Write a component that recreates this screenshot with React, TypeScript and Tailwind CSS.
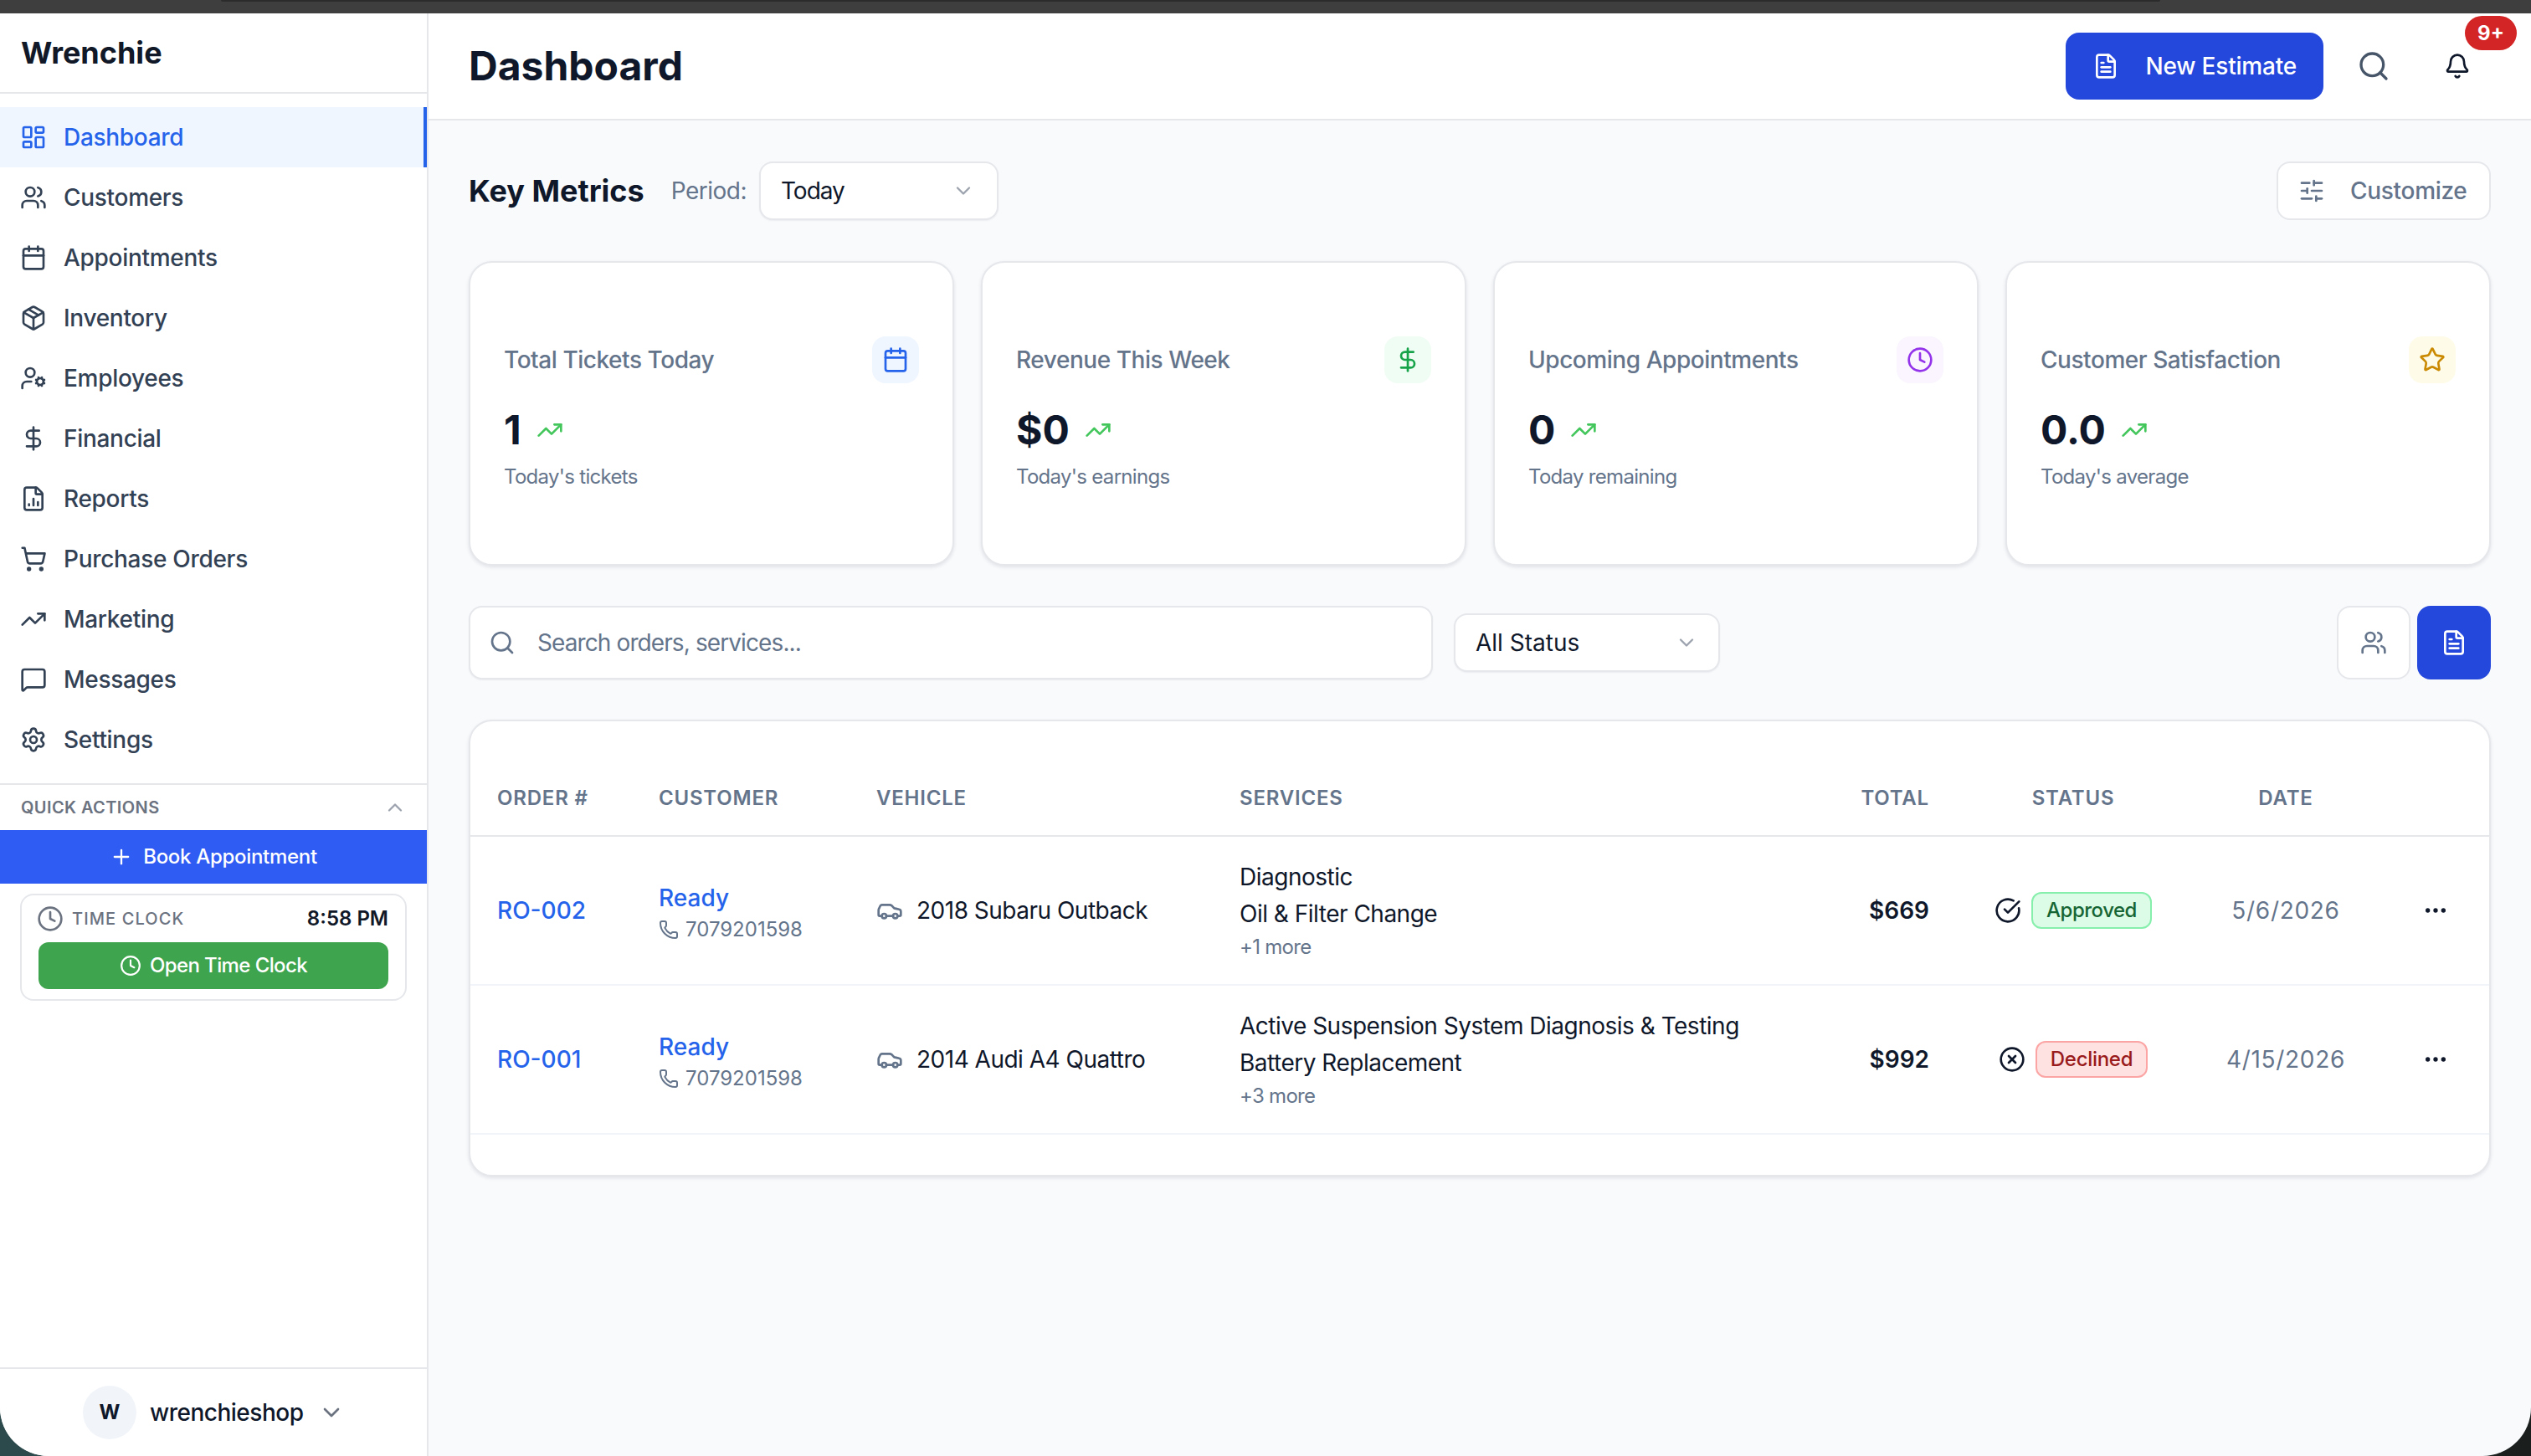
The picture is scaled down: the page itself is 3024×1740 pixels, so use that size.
import {
  Calendar,
  Car,
  ChevronDown,
  ChevronUp,
  CircleCheckBig,
  CircleX,
  Clock,
  DollarSign,
  Ellipsis,
  FileChartColumn,
  FileText,
  LayoutDashboard,
  MessageSquare,
  Package,
  Bell,
  Phone,
  Plus,
  Search,
  Settings,
  ShoppingCart,
  SlidersHorizontal,
  Star,
  TrendingUp,
  UserCog,
  Users,
} from "lucide-react";

const navItems = [
  { label: "Dashboard", icon: LayoutDashboard, active: true },
  { label: "Customers", icon: Users },
  { label: "Appointments", icon: Calendar },
  { label: "Inventory", icon: Package },
  { label: "Employees", icon: UserCog },
  { label: "Financial", icon: DollarSign },
  { label: "Reports", icon: FileChartColumn },
  { label: "Purchase Orders", icon: ShoppingCart },
  { label: "Marketing", icon: TrendingUp },
  { label: "Messages", icon: MessageSquare },
  { label: "Settings", icon: Settings },
];

const metrics = [
  { title: "Total Tickets Today", value: "1", note: "Today's tickets", icon: Calendar, box: "bg-[#eff6ff] text-[#2563eb]" },
  { title: "Revenue This Week", value: "$0", note: "Today's earnings", icon: DollarSign, box: "bg-[#f0fdf4] text-[#16a34a]" },
  { title: "Upcoming Appointments", value: "0", note: "Today remaining", icon: Clock, box: "bg-[#faf5ff] text-[#9333ea]" },
  { title: "Customer Satisfaction", value: "0.0", note: "Today's average", icon: Star, box: "bg-[#fefce8] text-[#ca8a04]" },
];

const orders = [
  {
    id: "RO-002",
    vehicle: "2018 Subaru Outback",
    services: ["Diagnostic", "Oil & Filter Change"],
    more: "+1 more",
    total: "$669",
    status: "Approved",
    date: "5/6/2026",
  },
  {
    id: "RO-001",
    vehicle: "2014 Audi A4 Quattro",
    services: ["Active Suspension System Diagnosis & Testing", "Battery Replacement"],
    more: "+3 more",
    total: "$992",
    status: "Declined",
    date: "4/15/2026",
  },
];

const columns = ["ORDER #", "CUSTOMER", "VEHICLE", "SERVICES"];

function Sidebar() {
  return (
    <aside className="w-[512px] shrink-0 bg-white border-r-2 border-[#e5e7eb] flex flex-col">
      <div className="h-[96px] shrink-0 border-b-2 border-[#e5e7eb] flex items-center pl-[25px]">
        <span className="text-[36px] font-bold text-[#111827]">Wrenchie</span>
      </div>

      <nav className="py-4 border-b-2 border-[#e5e7eb]">
        {navItems.map((item) => (
          <div
            key={item.label}
            className={
              item.active
                ? "h-[72px] flex items-center gap-5 pl-6 bg-[#eff6ff] border-r-4 border-[#2563eb] text-[#2563eb]"
                : "h-[72px] flex items-center gap-5 pl-6 text-[#334155]"
            }
          >
            <item.icon className="w-8 h-8" />
            <span className="text-[28px] font-medium tracking-[-0.3px]">{item.label}</span>
          </div>
        ))}
      </nav>

      <div className="h-[54px] flex items-center justify-between pl-[25px] pr-6">
        <span className="text-[20px] font-semibold tracking-[0.4px] text-[#6b7280]">QUICK ACTIONS</span>
        <ChevronUp className="w-7 h-7 text-[#9ca3af]" />
      </div>
      <button className="h-[64px] flex items-center justify-center gap-3 bg-[#2f5cf3] text-white">
        <Plus className="w-7 h-7" />
        <span className="text-[24px] font-medium tracking-[-0.3px]">Book Appointment</span>
      </button>

      <div className="mt-3 mx-6 border-2 border-[#e5e7eb] rounded-2xl px-5 py-3">
        <div className="h-8 flex items-center justify-between">
          <div className="flex items-center gap-[10px] text-[#6b7280] -ml-0.5">
            <Clock className="w-8 h-8" />
            <span className="text-[20px] font-medium tracking-[1.1px]">TIME CLOCK</span>
          </div>
          <span className="text-[24px] font-semibold text-[#111827]">8:58 PM</span>
        </div>
        <button className="mt-3 w-full h-[56px] rounded-xl bg-[#3fa44e] text-white flex items-center justify-center gap-[10px]">
          <Clock className="w-[26px] h-[26px]" />
          <span className="text-[24px] font-medium tracking-[-0.6px]">Open Time Clock</span>
        </button>
      </div>

      <div className="mt-auto h-[106px] border-t-2 border-[#e5e7eb] flex items-center pl-[99px]">
        <div className="w-16 h-16 rounded-full bg-[#f1f5f9] flex items-center justify-center text-[24px] font-bold text-[#0f172a]">
          W
        </div>
        <span className="ml-4 text-[28px] font-medium tracking-[-0.5px] text-[#0f172a]">wrenchieshop</span>
        <ChevronDown className="ml-[18px] w-8 h-8 text-[#6b7280]" />
      </div>
    </aside>
  );
}

function Header() {
  return (
    <header className="h-[128px] shrink-0 bg-white border-b-2 border-[#e5e7eb] flex items-center justify-between pl-12 pr-[52px]">
      <h1 className="text-[48px] font-bold text-[#0f172a]">Dashboard</h1>
      <div className="flex items-center">
        <button className="h-[80px] px-8 rounded-2xl bg-[#2447dc] text-white flex items-center gap-8">
          <FileText className="w-8 h-8" />
          <span className="text-[28px] font-medium tracking-[-0.2px]">New Estimate</span>
        </button>
        <button className="ml-6 w-[72px] h-[72px] flex items-center justify-center text-[#475569]">
          <Search className="w-10 h-10" />
        </button>
        <button className="relative ml-7 w-[72px] h-[72px] flex items-center justify-center text-[#0f172a]">
          <Bell className="w-8 h-8" />
          <span className="absolute left-[45px] top-[-24px] w-[62px] h-[41px] rounded-full bg-[#d32525] text-white text-[24px] font-bold flex items-center justify-center">
            9+
          </span>
        </button>
      </div>
    </header>
  );
}

function MetricCard({ metric }: { metric: (typeof metrics)[number] }) {
  return (
    <div className="bg-white border-2 border-[#e5e7eb] rounded-[28px] shadow-[0_2px_4px_rgba(15,23,42,0.1)] px-10 flex flex-col justify-center">
      <div className="flex items-center justify-between">
        <span className="text-[28px] font-medium tracking-[-0.45px] text-[#64748b]">{metric.title}</span>
        <div className={`w-14 h-14 rounded-2xl flex items-center justify-center ${metric.box}`}>
          <metric.icon className="w-8 h-8" />
        </div>
      </div>
      <div className="mt-6 h-16 flex items-center gap-[18px]">
        <span className="text-[48px] font-bold text-[#0f172a]">{metric.value}</span>
        <TrendingUp className="w-8 h-8 text-[#43c65b]" />
      </div>
      <p className="mt-2 text-[24px] leading-8 tracking-[-0.7px] text-[#64748b]">{metric.note}</p>
    </div>
  );
}

function OrdersTable() {
  return (
    <div className="mt-12 bg-white border-2 border-[#e5e7eb] rounded-[28px] shadow-[0_2px_4px_rgba(15,23,42,0.1)] py-12">
      <table className="w-full table-fixed">
        <colgroup>
          <col className="w-[193px]" />
          <col className="w-[260px]" />
          <col className="w-[434px]" />
          <col className="w-[741px]" />
          <col className="w-[147px]" />
          <col className="w-[280px]" />
          <col className="w-[228px]" />
          <col className="w-[129px]" />
        </colgroup>
        <thead>
          <tr className="h-[89px] border-b-2 border-[#e5e7eb] text-[24px] font-semibold tracking-[0.8px] text-[#64748b]">
            {columns.map((c) => (
              <th key={c} className="px-8 text-left font-semibold">
                {c}
              </th>
            ))}
            <th className="px-8 text-right font-semibold">TOTAL</th>
            <th className="px-8 text-center font-semibold">STATUS</th>
            <th className="px-8 text-center font-semibold">DATE</th>
            <th />
          </tr>
        </thead>
        <tbody>
          {orders.map((o) => (
            <tr key={o.id} className="h-[178px] border-b-2 border-[#f1f5f9]">
              <td className="px-8 text-[28px] font-medium text-[#2563eb]">{o.id}</td>
              <td className="px-8">
                <div className="pt-[3px] text-[28px] leading-10 font-medium text-[#2563eb]">Ready</div>
                <div className="mt-[2px] flex items-center gap-2 text-[24px] leading-8 text-[#64748b]">
                  <Phone className="w-6 h-6" />
                  <span>7079201598</span>
                </div>
              </td>
              <td className="px-8">
                <div className="flex items-center gap-[16px]">
                  <Car className="w-8 h-8 text-[#64748b]" />
                  <span className="text-[28px] tracking-[-0.5px] text-[#0f172a]">{o.vehicle}</span>
                </div>
              </td>
              <td className="px-8">
                <div className="space-y-1">
                  {o.services.map((s) => (
                    <div key={s} className="text-[28px] leading-10 tracking-[-0.5px] text-[#0f172a]">
                      {s}
                    </div>
                  ))}
                  <div className="text-[24px] leading-8 tracking-[-0.7px] text-[#64748b]">{o.more}</div>
                </div>
              </td>
              <td className="px-8 text-right text-[28px] font-semibold text-[#0f172a]">{o.total}</td>
              <td className="px-4">
                <div className="flex items-center justify-center gap-3">
                  {o.status === "Approved" ? (
                    <CircleCheckBig className="w-8 h-8 text-[#0f172a]" />
                  ) : (
                    <CircleX className="w-8 h-8 text-[#0f172a]" />
                  )}
                  <span
                    className={
                      o.status === "Approved"
                        ? "h-11 px-4 flex items-center rounded-xl border-2 border-[#86efac] bg-[#dcfce7] text-[24px] font-medium tracking-[-0.5px] text-[#166534]"
                        : "h-11 px-4 flex items-center rounded-xl border-2 border-[#fca5a5] bg-[#fee2e2] text-[24px] font-medium tracking-[-0.3px] text-[#991b1b]"
                    }
                  >
                    {o.status}
                  </span>
                </div>
              </td>
              <td className="px-4 text-center text-[28px] tracking-[0.7px] text-[#64748b]">{o.date}</td>
              <td>
                <div className="flex justify-center">
                  <Ellipsis className="w-8 h-8 text-[#0f172a]" />
                </div>
              </td>
            </tr>
          ))}
        </tbody>
      </table>
    </div>
  );
}

export default function App() {
  return (
    <div className="w-[3024px] h-[1740px] bg-[linear-gradient(90deg,#2c4a4c,#1a1f1d)] flex flex-col font-[Inter,sans-serif] overflow-hidden">
      <div className="h-4 shrink-0 bg-[#3e3e3e]">
        <div className="ml-[264px] w-[2317px] h-[2px] bg-[#2b2b2b] rounded-b-sm" />
      </div>
      <div className="flex-1 flex min-h-0 rounded-b-[58px] overflow-hidden bg-[#f8fafc]">
        <Sidebar />
        <main className="flex-1 min-w-0 flex flex-col">
          <Header />
          <div className="p-12">
            <div className="h-[72px] flex items-center">
              <h2 className="text-[36px] font-bold text-[#0f172a]">Key Metrics</h2>
              <span className="ml-8 text-[28px] tracking-[-0.5px] text-[#64748b]">Period:</span>
              <div className="ml-[15px] w-[286px] h-[70px] pl-6 pr-[26px] flex items-center justify-between bg-white border-2 border-[#e5e7eb] rounded-2xl shadow-[0_1px_2px_rgba(15,23,42,0.06)]">
                <span className="text-[28px] tracking-[-1px] text-[#0f172a]">Today</span>
                <ChevronDown className="w-7 h-7 text-[#9ca3af]" />
              </div>
              <button className="ml-auto w-[256px] h-[70px] px-6 flex items-center gap-[30px] bg-white border-2 border-[#e5e7eb] rounded-2xl text-[#64748b]">
                <SlidersHorizontal className="w-8 h-8" />
                <span className="text-[28px] font-medium tracking-[-0.3px]">Customize</span>
              </button>
            </div>

            <div className="mt-12 h-[364px] grid grid-cols-4 gap-8">
              {metrics.map((m) => (
                <MetricCard key={m.title} metric={m} />
              ))}
            </div>

            <div className="mt-12 h-[88px] flex items-center">
              <div className="w-[1152px] h-[88px] pl-[22px] flex items-center gap-[26px] bg-white border-2 border-[#e5e7eb] rounded-2xl shadow-[0_1px_2px_rgba(15,23,42,0.06)]">
                <Search className="w-8 h-8 text-[#64748b]" />
                <span className="text-[28px] tracking-[-0.9px] text-[#64748b]">Search orders, services...</span>
              </div>
              <div className="ml-[25px] w-[318px] h-[70px] pl-6 pr-6 flex items-center justify-between bg-white border-2 border-[#e5e7eb] rounded-2xl shadow-[0_1px_2px_rgba(15,23,42,0.06)]">
                <span className="text-[28px] text-[#0f172a]">All Status</span>
                <ChevronDown className="w-7 h-7 text-[#9ca3af]" />
              </div>
              <button className="ml-auto w-[88px] h-[88px] flex items-center justify-center bg-white border-2 border-[#e5e7eb] rounded-2xl text-[#64748b]">
                <Users className="w-8 h-8" />
              </button>
              <button className="ml-2 w-[88px] h-[88px] flex items-center justify-center bg-[#2447dc] rounded-2xl text-white">
                <FileText className="w-8 h-8" />
              </button>
            </div>

            <OrdersTable />
          </div>
        </main>
      </div>
    </div>
  );
}
